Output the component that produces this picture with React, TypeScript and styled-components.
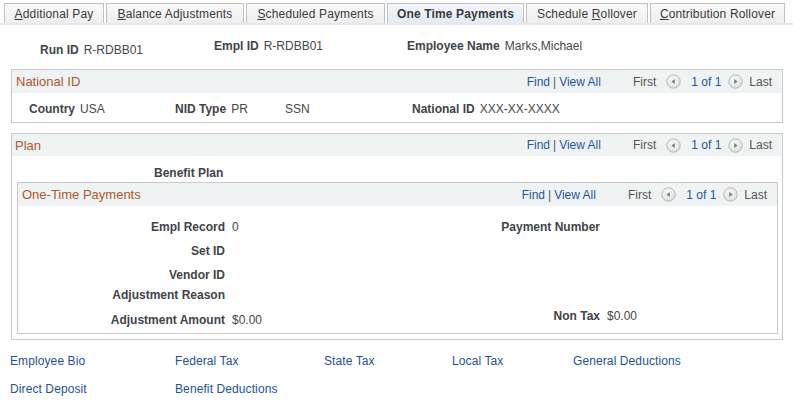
import React from "react";
import styled, { createGlobalStyle } from "styled-components";

const GlobalStyle = createGlobalStyle`
  body {
    margin: 0;
    background: #fff;
    font-family: "Liberation Sans", Arial, sans-serif;
    font-size: 12px;
    color: #444;
  }
`;

const Page = styled.div`
  width: 793px;
  height: 402px;
  overflow: hidden;
`;

const TabBar = styled.div`
  display: flex;
  gap: 2px;
  padding: 3px 0 0 4px;
  border-bottom: 2px solid #e2e8f0;
`;

const Tab = styled.div<{ $w: number; $active?: boolean }>`
  width: ${(p) => p.$w}px;
  height: 20px;
  box-sizing: border-box;
  display: flex;
  align-items: center;
  justify-content: center;
  border: 1px solid #c2c2c2;
  border-bottom: none;
  background: ${(p) =>
    p.$active
      ? "linear-gradient(#f3f6fa, #e4ebf3)"
      : "linear-gradient(#fafafa, #eeeeee)"};
  font-size: 12px;
  font-weight: ${(p) => (p.$active ? "bold" : "normal")};
  color: #3a3a3a;
  white-space: pre;
  letter-spacing: 0.15px;
`;

const HeaderRow = styled.div`
  display: flex;
  height: 30px;
  margin-top: 14px;
  padding-left: 40px;
`;

const Field = styled.div<{ $w?: number; $drop?: number }>`
  display: flex;
  gap: 5px;
  width: ${(p) => (p.$w ? `${p.$w}px` : "auto")};
  margin-top: ${(p) => p.$drop || 0}px;
  line-height: 14px;
  white-space: nowrap;
`;

const Label = styled.span`
  font-weight: bold;
  color: #404448;
`;

const Value = styled.span`
  color: #474747;
`;

const Box = styled.div<{ $nested?: boolean }>`
  border: 1px solid #cacaca;
  background: #fff;
  margin: ${(p) => (p.$nested ? "0 4px 0 5px" : "0")};
`;

const Panel = styled.div<{ $mt?: number }>`
  margin: ${(p) => p.$mt || 0}px 10px 0 11px;
  width: 772px;
  box-sizing: border-box;
  border: 1px solid #cacaca;
`;

const BoxHeader = styled.div<{ $h: number }>`
  display: flex;
  align-items: center;
  height: ${(p) => p.$h}px;
  background: #f0f3f4;
  padding: 0 10px 0 ${(p) => (p.$h === 23 ? 4 : 3)}px;
`;

const BoxTitle = styled.span`
  font-size: 13px;
  color: #b0582b;
  flex: 1;
`;

const Nav = styled.div`
  display: flex;
  align-items: center;
  white-space: nowrap;
`;

const NavLink = styled.span`
  color: #2556a0;
`;

const NavSep = styled.span`
  color: #555;
  margin: 0 3px;
`;

const NavText = styled.span<{ $ml?: number }>`
  color: #555;
  margin-left: ${(p) => p.$ml || 0}px;
`;

const Pager = styled.span<{ $ml: number }>`
  color: #2556a0;
  margin-left: ${(p) => p.$ml}px;
`;

const ArrowIcon = styled.svg<{ $ml: number }>`
  display: block;
  margin-left: ${(p) => p.$ml}px;
`;

const NidRow = styled.div`
  display: flex;
  padding: 9px 0 6px 17px;
  line-height: 14px;
`;

const PlanRow = styled.div`
  padding: 10px 0 2px 142px;
  line-height: 14px;
`;

const PlanBody = styled.div`
  padding-bottom: 5px;
`;

const FieldGrid = styled.div`
  display: grid;
  grid-template-columns: 207px 231px 130px 1fr;
  grid-template-rows: 24px 24px 20px 25px 14px;
  column-gap: 7px;
  padding: 14px 0 6px 0;
  line-height: 14px;
`;

const GridLabel = styled.span<{ $raise?: number }>`
  font-weight: bold;
  color: #404448;
  text-align: right;
  white-space: nowrap;
  margin-top: ${(p) => -(p.$raise || 0)}px;
`;

const GridValue = styled.span<{ $raise?: number }>`
  color: #474747;
  margin-top: ${(p) => -(p.$raise || 0)}px;
`;

const Links = styled.div`
  display: grid;
  grid-template-columns: 165px 149px 128px 121px auto;
  grid-auto-rows: 28px;
  padding: 14px 0 0 10px;
  line-height: 14px;
`;

const PageLink = styled.span`
  color: #1f4f9e;
  white-space: nowrap;
  letter-spacing: 0.1px;
`;

const Arrow = ({ dir, ml }: { dir: "left" | "right"; ml: number }) => (
  <ArrowIcon $ml={ml} width="15" height="15" viewBox="0 0 15 15">
    <defs>
      <radialGradient id={`g-${dir}`} cx="45%" cy="40%" r="65%">
        <stop offset="0%" stopColor="#fbfbfb" />
        <stop offset="70%" stopColor="#e4e4e4" />
        <stop offset="100%" stopColor="#c8c8c8" />
      </radialGradient>
    </defs>
    <circle cx="7.5" cy="7.5" r="6.8" fill={`url(#g-${dir})`} stroke="#b9b9b9" strokeWidth="0.9" />
    {dir === "left" ? (
      <path d="M5.3 7.5 L8.8 5 L8.8 10 Z" fill="#7d7d7d" />
    ) : (
      <path d="M9.7 7.5 L6.2 5 L6.2 10 Z" fill="#7d7d7d" />
    )}
  </ArrowIcon>
);

const NavBar = () => (
  <Nav>
    <NavLink>Find</NavLink>
    <NavSep>|</NavSep>
    <NavLink>View All</NavLink>
    <NavText $ml={32}>First</NavText>
    <Arrow dir="left" ml={10} />
    <Pager $ml={10}>1 of 1</Pager>
    <Arrow dir="right" ml={7} />
    <NavText $ml={6}>Last</NavText>
  </Nav>
);

const tabs = [
  { w: 100, pre: "", key: "A", rest: "dditional Pay" },
  { w: 138, pre: "", key: "B", rest: "alance Adjustments" },
  { w: 139, pre: "", key: "S", rest: "cheduled Payments" },
  { w: 137, pre: "One Time Payments", key: "", rest: "", active: true },
  { w: 122, pre: "Schedule ", key: "R", rest: "ollover" },
  { w: 135, pre: "", key: "C", rest: "ontribution Rollover" },
];

export default function App() {
  return (
    <Page>
      <GlobalStyle />
      <TabBar>
        {tabs.map((t, i) => (
          <Tab key={i} $w={t.w} $active={t.active}>
            <span>
              {t.pre}
              {t.key && <u>{t.key}</u>}
              {t.rest}
            </span>
          </Tab>
        ))}
      </TabBar>

      <HeaderRow>
        <Field $w={174} $drop={4}>
          <Label>Run ID</Label>
          <Value>R-RDBB01</Value>
        </Field>
        <Field $w={193}>
          <Label>Empl ID</Label>
          <Value>R-RDBB01</Value>
        </Field>
        <Field>
          <Label>Employee Name</Label>
          <Value>Marks,Michael</Value>
        </Field>
      </HeaderRow>

      <Panel>
        <BoxHeader $h={23}>
          <BoxTitle>National ID</BoxTitle>
          <NavBar />
        </BoxHeader>
        <NidRow>
          <Field $w={146}>
            <Label>Country</Label>
            <Value>USA</Value>
          </Field>
          <Field $w={110}>
            <Label>NID Type</Label>
            <Value>PR</Value>
          </Field>
          <Field $w={127}>
            <Value>SSN</Value>
          </Field>
          <Field>
            <Label>National ID</Label>
            <Value>XXX-XX-XXXX</Value>
          </Field>
        </NidRow>
      </Panel>

      <Panel $mt={10}>
        <BoxHeader $h={22}>
          <BoxTitle>Plan</BoxTitle>
          <NavBar />
        </BoxHeader>
        <PlanBody>
          <PlanRow>
            <Label>Benefit Plan</Label>
          </PlanRow>
          <Box $nested>
            <BoxHeader $h={23}>
              <BoxTitle>One-Time Payments</BoxTitle>
              <NavBar />
            </BoxHeader>
            <FieldGrid>
              <GridLabel>Empl Record</GridLabel>
              <GridValue>0</GridValue>
              <GridLabel>Payment Number</GridLabel>
              <GridValue />

              <GridLabel>Set ID</GridLabel>
              <GridValue />
              <span />
              <span />

              <GridLabel>Vendor ID</GridLabel>
              <GridValue />
              <span />
              <span />

              <GridLabel>Adjustment Reason</GridLabel>
              <GridValue />
              <span />
              <span />

              <GridLabel>Adjustment Amount</GridLabel>
              <GridValue>$0.00</GridValue>
              <GridLabel $raise={4}>Non Tax</GridLabel>
              <GridValue $raise={4}>$0.00</GridValue>
            </FieldGrid>
          </Box>
        </PlanBody>
      </Panel>

      <Links>
        <PageLink>Employee Bio</PageLink>
        <PageLink>Federal Tax</PageLink>
        <PageLink>State Tax</PageLink>
        <PageLink>Local Tax</PageLink>
        <PageLink>General Deductions</PageLink>
        <PageLink>Direct Deposit</PageLink>
        <PageLink>Benefit Deductions</PageLink>
      </Links>
    </Page>
  );
}
